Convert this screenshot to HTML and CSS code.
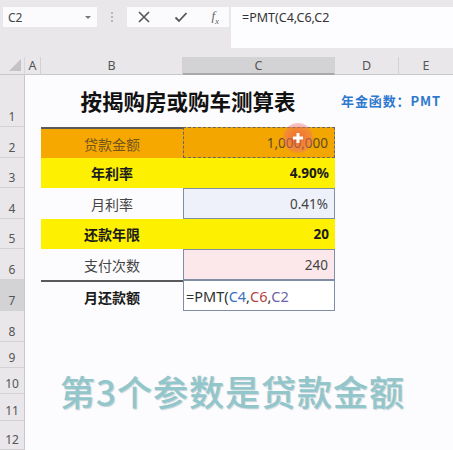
FILE: index.html
```html
<!DOCTYPE html>
<html lang="zh">
<head>
<meta charset="utf-8">
<link rel="stylesheet" href="styles.css">
</head>
<body>
<div class="app">
  <div class="toolbar">
    <div class="namebox"><span>C2</span><span class="caret"></span></div>
    <div class="grip"><i></i><i></i><i></i></div>
    <div class="fxbox">
      <svg width="14" height="14" viewBox="0 0 14 14"><path d="M2 2 L12 12 M12 2 L2 12" stroke="#555" stroke-width="1.6" fill="none"/></svg>
      <svg width="14" height="14" viewBox="0 0 14 14"><path d="M1.5 7.5 L5 11 L12.5 3" stroke="#555" stroke-width="1.8" fill="none"/></svg>
      <span class="fx"><i>f</i><sub>x</sub></span>
    </div>
    <div class="formula">=PMT(C4,C6,C2</div>
  </div>

  <div class="sheet">
    <div class="corner"><span class="tri"></span></div>
    <div class="colh">A</div>
    <div class="colh">B</div>
    <div class="colh sel">C</div>
    <div class="colh">D</div>
    <div class="colh last">E</div>

    <div class="rowh">1</div>
    <div class="cell"></div>
    <div class="cell title">按揭购房或购车测算表</div>
    <div class="cell note">年金函数：PMT</div>

    <div class="rowh">2</div>
    <div class="cell"></div>
    <div class="cell lab orange topline">贷款金额</div>
    <div class="cell val orange2 ants">1,000,000<span class="cursor"></span></div>
    <div class="cell"></div>
    <div class="cell"></div>

    <div class="rowh">3</div>
    <div class="cell"></div>
    <div class="cell lab yellow bold">年利率</div>
    <div class="cell val yellow bold">4.90%</div>
    <div class="cell"></div>
    <div class="cell"></div>

    <div class="rowh">4</div>
    <div class="cell"></div>
    <div class="cell lab">月利率</div>
    <div class="cell val lav boxed">0.41%</div>
    <div class="cell"></div>
    <div class="cell"></div>

    <div class="rowh">5</div>
    <div class="cell"></div>
    <div class="cell lab yellow bold">还款年限</div>
    <div class="cell val yellow bold">20</div>
    <div class="cell"></div>
    <div class="cell"></div>

    <div class="rowh">6</div>
    <div class="cell"></div>
    <div class="cell lab">支付次数</div>
    <div class="cell val pink boxed">240</div>
    <div class="cell"></div>
    <div class="cell"></div>

    <div class="rowh sel">7</div>
    <div class="cell"></div>
    <div class="cell lab bold topline">月还款额</div>
    <div class="cell edit boxed">=PMT(<span class="r1">C4</span>,<span class="r2">C6</span>,<span class="r3">C2</span></div>
    <div class="cell"></div>
    <div class="cell"></div>

    <div class="rowh">8</div>
    <div class="cell span5"></div>
    <div class="rowh">9</div>
    <div class="cell span5"></div>
    <div class="rowh">10</div>
    <div class="cell span5 caption-row"><span class="caption">第3个参数是贷款金额</span></div>
    <div class="rowh">11</div>
    <div class="cell span5"></div>
    <div class="rowh">12</div>
    <div class="cell span5"></div>
  </div>
</div>
</body>
</html>
```

FILE: styles.css
```css
* { box-sizing: border-box; }
html, body { margin: 0; padding: 0; }
body {
  width: 453px;
  height: 450px;
  overflow: hidden;
  background: #fcfbfd;
  font-family: "Noto Sans", "Noto Sans CJK SC", sans-serif;
  color: #333;
}
.app { width: 453px; height: 450px; display: flex; flex-direction: column; }

.toolbar {
  height: 57px;
  background: #e9e7ea;
  position: relative;
  display: flex;
  align-items: flex-start;
  padding-top: 7px;
}
.namebox {
  margin-left: 3px;
  width: 94px;
  height: 20px;
  background: #fbfafc;
  display: flex;
  align-items: center;
  justify-content: space-between;
  padding: 0 6px 0 5px;
  font-size: 12px;
  color: #444;
}
.caret {
  width: 0; height: 0;
  border-left: 3px solid transparent;
  border-right: 3px solid transparent;
  border-top: 3px solid #777;
}
.grip {
  width: 30px;
  height: 20px;
  display: flex;
  flex-direction: column;
  align-items: center;
  justify-content: center;
  gap: 2px;
}
.grip i { width: 2px; height: 2px; background: #b8b6ba; display: block; }
.fxbox {
  width: 102px;
  height: 20px;
  background: #fbfafc;
  display: flex;
  align-items: center;
  justify-content: space-between;
  padding: 0 10px 0 10px;
}
.fx { font-family: "Liberation Serif", serif; font-size: 13px; color: #666; }
.fx sub { font-size: 9px; font-style: italic; }
.formula {
  margin-left: 2px;
  flex: 1;
  height: 41px;
  background: #fdfcfe;
  font-size: 12.5px;
  color: #333;
  padding: 2px 0 0 11px;
}

.sheet {
  flex: 1;
  display: grid;
  grid-template-columns: 25px 16px 142px 152px 64px 54px;
  grid-template-rows: 18px 52px 31px 30px 31px 30px 31px 31px 31px 26px 26px 27px 29px;
}
.corner {
  background: #e9e7ea;
  border-right: 1px solid #d8d6d9;
  border-bottom: 1px solid #c9c7ca;
  position: relative;
}
.tri {
  position: absolute;
  right: 3px; bottom: 3px;
  width: 0; height: 0;
  border-left: 12px solid transparent;
  border-bottom: 12px solid #c4c2c5;
}
.colh {
  background: #e9e7ea;
  border-right: 1px solid #d3d1d4;
  border-bottom: 1px solid #c9c7ca;
  display: flex;
  align-items: center;
  justify-content: center;
  font-size: 12.5px;
  color: #555;
}
.colh.sel { background: #d3d2d4; border-bottom: 2px solid #a8a8a8; }
.colh.last { border-right: none; }
.rowh {
  background: #e9e7ea;
  border-right: 1px solid #c9c7ca;
  border-bottom: 1px solid #d3d1d4;
  display: flex;
  align-items: flex-end;
  justify-content: center;
  padding-bottom: 1px;
  font-size: 12px;
  color: #555;
}
.rowh.sel { background: #d3d2d4; }
.cell {
  display: flex;
  align-items: center;
  font-size: 13px;
  color: #333;
  position: relative;
}
.span5 { grid-column: span 5; }
.title {
  grid-column: span 2;
  justify-content: center;
  font-family: "Noto Sans CJK SC", sans-serif;
  font-weight: 700;
  font-size: 21.5px;
  color: #111;
  padding-bottom: 2px;
}
.note {
  grid-column: span 2;
  font-family: "Noto Sans CJK SC", sans-serif;
  font-weight: 700;
  font-size: 13px;
  color: #2e79cf;
  padding-left: 6px;
  padding-bottom: 1px;
  letter-spacing: 0.9px;
}
.lab {
  justify-content: center;
  font-family: "Noto Sans CJK SC", sans-serif;
  font-size: 14px;
  color: #444;
}
.val { justify-content: flex-end; padding-right: 6px; color: #444; font-size: 13.5px; }
.bold { font-weight: 700; color: #1b1b1b; }
.lab.bold { color: #1b1b1b; }
.orange { background: #f6a800; color: #74561c; }
.orange2 { background: #f3a600; color: #5f4a24; }
.yellow { background: #fdf000; }
.lav { background: #eef0fa; }
.pink { background: #fce8ea; }
.topline { border-top: 2px solid #5a5a5a; }
.boxed { border: 1px solid #7f8ea4; }
.ants { border: 1px dashed #666; }
.edit { justify-content: flex-start; padding-left: 2px; font-size: 14.5px; color: #333; background: #fff; }
.r1 { color: #3c6fc0; }
.r2 { color: #b54444; }
.r3 { color: #6f63a8; }
.cursor {
  position: absolute;
  left: 99px; top: -5px;
  width: 30px; height: 30px;
  border-radius: 50%;
  background: radial-gradient(circle, rgba(236,90,70,0.75) 0%, rgba(240,110,110,0.45) 60%, rgba(245,140,150,0.2) 100%);
}
.cursor::before, .cursor::after {
  content: "";
  position: absolute;
  background: #fff;
  left: 50%; top: 50%;
}
.cursor::before { width: 10px; height: 3px; transform: translate(-50%, -50%); }
.cursor::after { width: 3px; height: 10px; transform: translate(-50%, -50%); }
.caption-row { overflow: visible; }
.caption {
  position: absolute;
  left: 35px;
  top: -3px;
  font-family: "Noto Sans CJK SC", sans-serif;
  font-weight: 500;
  font-size: 35px;
  letter-spacing: 1px;
  color: #93c6cb;
  text-shadow: 1px 1px 1px rgba(90,140,150,0.35);
  white-space: nowrap;
}
```
